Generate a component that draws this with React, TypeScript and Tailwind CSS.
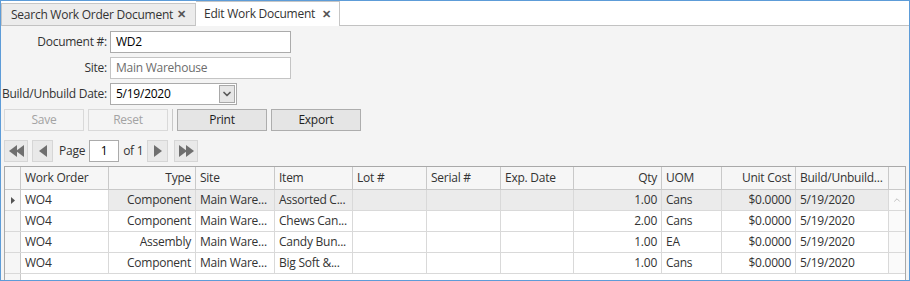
import { ChevronDown, ChevronUp } from "lucide-react";

type Line = {
  order: string;
  type: string;
  site: string;
  item: string;
  qty: string;
  uom: string;
  cost: string;
  date: string;
};

const lines: Line[] = [
  { order: "WO4", type: "Component", site: "Main Ware...", item: "Assorted C...", qty: "1.00", uom: "Cans", cost: "$0.0000", date: "5/19/2020" },
  { order: "WO4", type: "Component", site: "Main Ware...", item: "Chews Can...", qty: "2.00", uom: "Cans", cost: "$0.0000", date: "5/19/2020" },
  { order: "WO4", type: "Assembly", site: "Main Ware...", item: "Candy Bun...", qty: "1.00", uom: "EA", cost: "$0.0000", date: "5/19/2020" },
  { order: "WO4", type: "Component", site: "Main Ware...", item: "Big Soft &...", qty: "1.00", uom: "Cans", cost: "$0.0000", date: "5/19/2020" },
];

const cols = [
  { key: "order", label: "Work Order", w: "w-[88px]", right: false },
  { key: "type", label: "Type", w: "w-[87px]", right: true },
  { key: "site", label: "Site", w: "w-[79px]", right: false },
  { key: "item", label: "Item", w: "w-[78px]", right: false },
  { key: "lot", label: "Lot #", w: "w-[74px]", right: false },
  { key: "serial", label: "Serial #", w: "w-[74px]", right: false },
  { key: "exp", label: "Exp. Date", w: "w-[73px]", right: false },
  { key: "qty", label: "Qty", w: "w-[88px]", right: true },
  { key: "uom", label: "UOM", w: "w-[60px]", right: false },
  { key: "cost", label: "Unit Cost", w: "w-[74px]", right: true },
  { key: "date", label: "Build/Unbuild...", w: "w-[93px]", right: false },
] as const;

const Tri = ({ dir }: { dir: "left" | "right" }) => (
  <svg width="8" height="12" viewBox="0 0 8 12">
    {dir === "left" ? <path d="M8 0 L0 6 L8 12 Z" fill="#6f6f6f" /> : <path d="M0 0 L8 6 L0 12 Z" fill="#6f6f6f" />}
  </svg>
);

const PagerButton = ({ w, children }: { w: string; children: React.ReactNode }) => (
  <div className={`${w} h-[22px] flex items-center justify-center border border-[#d6d6d6] bg-[#e9e9e9]`}>
    {children}
  </div>
);

const ActionButton = ({ label, w, disabled }: { label: string; w: string; disabled?: boolean }) => (
  <div
    className={`${w} h-[22px] flex items-center justify-center border ${
      disabled ? "border-[#d9d9d9] bg-[#f4f4f4] text-[#a3a3a3]" : "border-[#adadad] bg-[#e5e5e5] text-[#1e1e1e]"
    }`}
  >
    {label}
  </div>
);

export default function App() {
  return (
    <div
      className="w-[910px] h-[281px] overflow-hidden border border-[#5d9cd8] bg-[#f4f4f4] text-[12px] text-[#333]"
      style={{ fontFamily: '"Open Sans", "Noto Sans", sans-serif', letterSpacing: "-0.25px" }}
    >
      {/* tab strip */}
      <div className="h-[25px] bg-white border-b border-[#c2c2c2] flex items-end">
        <div className="w-[195px] h-[23px] -mb-px flex items-center justify-between pl-[9px] pr-[9px] bg-[#ececec] border border-[#c6c6c6] border-b-[#c2c2c2]">
          <span>Search Work Order Document</span>
          <span className="text-[11px] font-bold text-[#555]">✕</span>
        </div>
        <div className="w-[144px] h-[25px] -mb-px flex items-center justify-between pl-[8px] pr-[8px] bg-white border-r border-t border-[#c6c6c6]">
          <span>Edit Work Document</span>
          <span className="text-[11px] font-bold text-[#555]">✕</span>
        </div>
      </div>

      <div className="pl-[3px] pt-[5px] flex flex-col">
        {/* form */}
        <div className="flex flex-col gap-[4px] -ml-[3px]">
          <div className="flex items-center">
            <label className="w-[107px] pr-[1px] text-right">Document #:</label>
            <div className="ml-[2px] w-[181px] h-[22px] flex items-center px-[5px] bg-white border border-[#ababab] text-black">WD2</div>
          </div>
          <div className="flex items-center">
            <label className="w-[107px] pr-[1px] text-right">Site:</label>
            <div className="ml-[2px] w-[181px] h-[22px] flex items-center px-[5px] bg-white border border-[#c4c4c4] text-[#6d6d6d]">Main Warehouse</div>
          </div>
          <div className="flex items-center">
            <label className="w-[107px] pr-[1px] text-right">Build/Unbuild Date:</label>
            <div className="ml-[2px] w-[127px] h-[22px] flex items-center justify-between pl-[5px] pr-[1px] bg-white border border-[#ababab] text-black">
              <span>5/19/2020</span>
              <span className="w-[16px] h-[18px] flex items-center justify-center bg-[#e6e6e6] border border-[#a8a8a8]">
                <ChevronDown size={12} strokeWidth={3.5} color="#5a5a5a" />
              </span>
            </div>
          </div>
        </div>

        {/* actions */}
        <div className="mt-[4px] flex items-center">
          <ActionButton label="Save" w="w-[80px]" disabled />
          <div className="ml-[4px]" />
          <ActionButton label="Reset" w="w-[80px]" disabled />
          <div className="mx-[4px] w-px h-[22px] bg-[#c8c8c8]" />
          <ActionButton label="Print" w="w-[90px]" />
          <div className="ml-[4px]" />
          <ActionButton label="Export" w="w-[90px]" />
        </div>

        {/* pager */}
        <div className="mt-[9px] flex items-center">
          <PagerButton w="w-[24px]">
            <span className="flex -space-x-[1px]">
              <Tri dir="left" />
              <Tri dir="left" />
            </span>
          </PagerButton>
          <div className="ml-[4px]" />
          <PagerButton w="w-[21px]">
            <Tri dir="left" />
          </PagerButton>
          <span className="ml-[6px]">Page</span>
          <div className="ml-[4px] w-[30px] h-[22px] flex items-center justify-center bg-white border border-[#ababab] text-black">1</div>
          <span className="ml-[4px]">of 1</span>
          <div className="ml-[4px]" />
          <PagerButton w="w-[21px]">
            <Tri dir="right" />
          </PagerButton>
          <div className="ml-[6px]" />
          <PagerButton w="w-[24px]">
            <span className="flex -space-x-[1px]">
              <Tri dir="right" />
              <Tri dir="right" />
            </span>
          </PagerButton>
        </div>

        {/* grid */}
        <div className="mt-[4px] w-[902px] h-[130px] border border-[#a9a9a9] bg-white">
          <div className="flex h-[23px] bg-[#f6f6f6] border-b border-[#c9c9c9]">
            <div className="w-[16px] border-r border-[#c9c9c9]" />
            {cols.map((c) => (
              <div
                key={c.key}
                className={`${c.w} flex items-center px-[4px] border-r border-[#c9c9c9] ${c.right ? "justify-end" : ""}`}
              >
                {c.label}
              </div>
            ))}
            <div className="flex-1" />
          </div>
          {lines.map((l, i) => (
            <div key={i} className={`flex h-[21px] border-b border-[#d9d9d9] ${i === 0 ? "bg-[#ebebeb]" : "bg-white"}`}>
              <div className="w-[16px] flex items-center justify-center bg-[#f6f6f6] border-r border-[#c9c9c9]">
                {i === 0 && (
                  <svg width="4" height="7" viewBox="0 0 4 7">
                    <path d="M0 0 L4 3.5 L0 7 Z" fill="#555" />
                  </svg>
                )}
              </div>
              {cols.map((c) => (
                <div
                  key={c.key}
                  className={`${c.w} flex items-center px-[4px] border-r border-[#d9d9d9] whitespace-nowrap overflow-hidden ${
                    c.right ? "justify-end" : ""
                  } ${i === 0 && c.key === "order" ? "bg-white" : ""}`}
                >
                  {(l as Record<string, string>)[c.key] ?? ""}
                </div>
              ))}
              <div className="flex-1 flex items-center justify-center bg-[#fafafa]">
                {i === 0 && <ChevronUp size={10} strokeWidth={2} color="#b5b5b5" />}
              </div>
            </div>
          ))}
          <div className="w-[16px] h-[30px] bg-[#f6f6f6] border-r border-[#c9c9c9]" />
        </div>
      </div>
    </div>
  );
}
